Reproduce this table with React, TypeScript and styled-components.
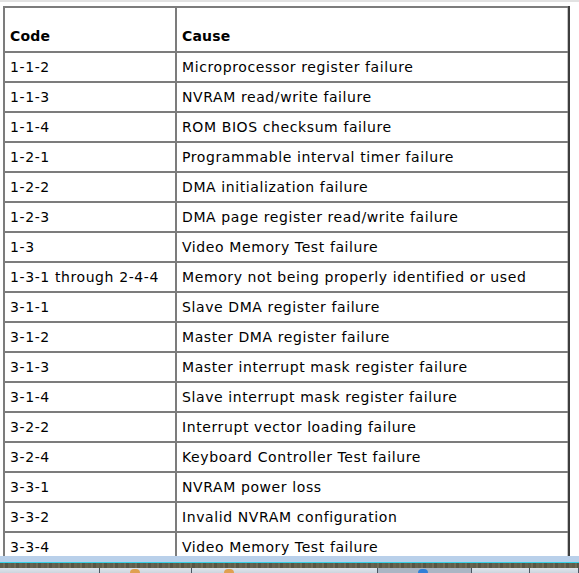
import React from "react";
import styled, { createGlobalStyle } from "styled-components";

const Global = createGlobalStyle`
  html, body { margin: 0; padding: 0; background: #ffffff; }
  #root { width: 579px; height: 573px; }
`;

const Screen = styled.div`
  display: flex;
  flex-direction: column;
  width: 579px;
  height: 573px;
  overflow: hidden;
`;

const Viewport = styled.div`
  flex: 0 0 556px;
  height: 556px;
  overflow: hidden;
  box-sizing: border-box;
  border-top: 2px solid #e2e2e2;
  padding: 4px 0 0 3px;
  background: #ffffff;
`;

const Grid = styled.div`
  display: grid;
  grid-template-columns: 170px 391px;
  grid-auto-rows: 28px;
  grid-template-rows: 43px;
  gap: 2px;
  width: max-content;
  background: #7c7c7c;
  padding: 2px 0 2px 2px;
  border-right: 2px solid #3e3e3e;
  font-family: "DejaVu Sans", Verdana, sans-serif;
  font-size: 14px;
  letter-spacing: 0.6px;
  color: #000;
`;

const Cell = styled.div<{ $head?: boolean; $last?: boolean }>`
  background: #ffffff;
  display: flex;
  align-items: ${(p) => (p.$head ? "flex-end" : "center")};
  padding: ${(p) => (p.$head ? "0 0 7px 5px" : "0 0 0 5px")};
  font-weight: ${(p) => (p.$head ? 700 : 400)};
  letter-spacing: ${(p) => (p.$head ? "0.2px" : "0.6px")};
  white-space: nowrap;
  box-sizing: border-box;
  border-right: ${(p) => (p.$last ? "1px solid #c6c6c6" : "none")};
`;

const Taskbar = styled.div`
  flex: 0 0 17px;
  display: flex;
  flex-direction: column;
`;

const BlueBand = styled.div`
  height: 6px;
  background: #b9d0ea;
`;

const CyanLine = styled.div`
  height: 1px;
  background: #34d3e8;
`;

const Rough = styled.div`
  height: 5px;
  background: repeating-linear-gradient(90deg, #5f5e4b 0 3px, #6e6b56 3px 5px, #575645 5px 8px, #666450 8px 11px);
`;

const Buttons = styled.div`
  flex: 1;
  display: flex;
  background: #cfd7e0;
`;

const TaskButton = styled.div<{ $w: number; $active?: boolean }>`
  flex: 0 0 ${(p) => p.$w}px;
  box-sizing: border-box;
  border-right: 1px solid #4b5560;
  background: ${(p) => (p.$active ? "#aab6c4" : "linear-gradient(#dfe5ec, #cdd5de)")};
  position: relative;
`;

const Dot = styled.span<{ $x: number; $c: string }>`
  position: absolute;
  left: ${(p) => p.$x}px;
  top: 1px;
  width: 10px;
  height: 4px;
  border-radius: 5px 5px 0 0;
  background: ${(p) => p.$c};
`;

const rows: [string, string][] = [
  ["1-1-2", "Microprocessor register failure"],
  ["1-1-3", "NVRAM read/write failure"],
  ["1-1-4", "ROM BIOS checksum failure"],
  ["1-2-1", "Programmable interval timer failure"],
  ["1-2-2", "DMA initialization failure"],
  ["1-2-3", "DMA page register read/write failure"],
  ["1-3", "Video Memory Test failure"],
  ["1-3-1 through 2-4-4", "Memory not being properly identified or used"],
  ["3-1-1", "Slave DMA register failure"],
  ["3-1-2", "Master DMA register failure"],
  ["3-1-3", "Master interrupt mask register failure"],
  ["3-1-4", "Slave interrupt mask register failure"],
  ["3-2-2", "Interrupt vector loading failure"],
  ["3-2-4", "Keyboard Controller Test failure"],
  ["3-3-1", "NVRAM power loss"],
  ["3-3-2", "Invalid NVRAM configuration"],
  ["3-3-4", "Video Memory Test failure"],
];

export default function App() {
  return (
    <>
      <Global />
      <Screen>
        <Viewport>
          <Grid>
            <Cell $head>Code</Cell>
            <Cell $head $last>Cause</Cell>
            {rows.map(([code, cause]) => (
              <React.Fragment key={code + cause}>
                <Cell>{code}</Cell>
                <Cell $last>{cause}</Cell>
              </React.Fragment>
            ))}
          </Grid>
        </Viewport>
        <Taskbar>
          <BlueBand />
          <CyanLine />
          <Rough />
          <Buttons>
            <TaskButton $w={100} />
            <TaskButton $w={92}>
              <Dot $x={30} $c="#e0a050" />
            </TaskButton>
            <TaskButton $w={186}>
              <Dot $x={32} $c="#e0a050" />
            </TaskButton>
            <TaskButton $w={94} $active>
              <Dot $x={40} $c="#2f7fd8" />
            </TaskButton>
            <TaskButton $w={58} />
            <TaskButton $w={49} />
          </Buttons>
        </Taskbar>
      </Screen>
    </>
  );
}
